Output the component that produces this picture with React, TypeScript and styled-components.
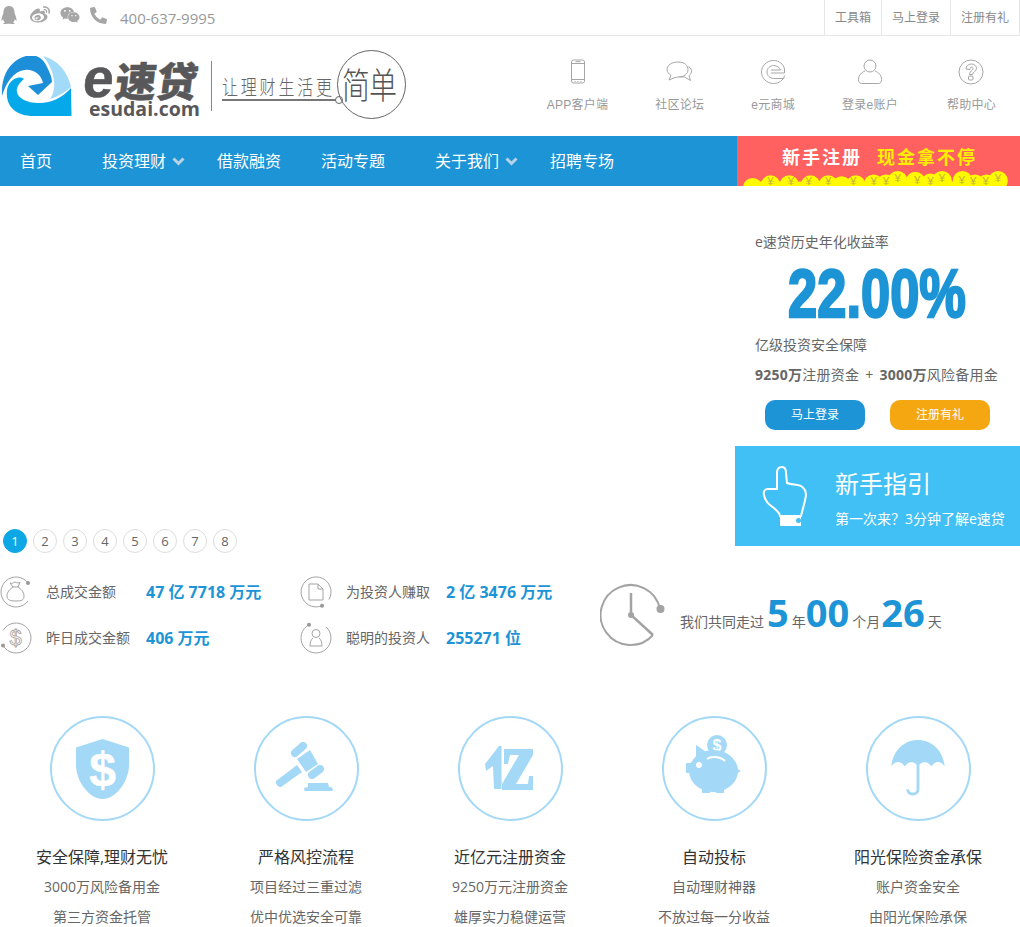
import React from "react";
import styled, { createGlobalStyle } from "styled-components";
import { FaQq, FaWeibo, FaWeixin, FaPhoneAlt } from "react-icons/fa";

const Global = createGlobalStyle`
  html, body { margin: 0; padding: 0; background: #fff; }
  body { font-family: "Open Sans", "Noto Sans CJK SC", sans-serif; color: #666; }
  * { box-sizing: border-box; }
`;

const BLUE = "#1c94d6";
const ICON = "#a3d8f7";

const Page = styled.div`
  width: 1020px;
  height: 927px;
  overflow: hidden;
`;

/* top bar */
const TopBar = styled.div`
  height: 36px;
  border-bottom: 1px solid #e6e6e6;
  display: flex;
  justify-content: space-between;
  align-items: stretch;
`;
const Socials = styled.div`
  display: flex;
  align-items: center;
  color: #a6a6a6;
  padding-bottom: 5px;
`;
const SocialIcon = styled.span<{ $w: number }>`
  width: ${(p) => p.$w}px;
  display: flex;
  align-items: center;
  svg { display: block; }
`;
const Hotline = styled.span`
  font-size: 15px;
  line-height: 24px;
  color: #999;
  margin-left: 3px;
  padding-top: 5px;
`;
const TopLinks = styled.div`
  display: flex;
`;
const TopLink = styled.a<{ $last?: boolean }>`
  font-size: 12px;
  line-height: 35px;
  color: #888;
  padding: 0 10px;
  border-left: 1px solid #e6e6e6;
  border-right: ${(p) => (p.$last ? "1px solid #e6e6e6" : "0")};
`;

/* header */
const Header = styled.div`
  height: 100px;
  display: flex;
  justify-content: space-between;
`;
const Brand = styled.div`
  display: flex;
  align-items: flex-start;
`;
const Swirl = styled.svg`
  display: block;
  width: 73px;
  height: 62px;
  margin-top: 20px;
`;
const Word = styled.div`
  width: 128px;
  margin-left: 10px;
  margin-top: 22px;
`;
const WordMain = styled.div`
  font-family: "Noto Sans CJK SC", sans-serif;
  font-weight: 900;
  font-size: 41px;
  line-height: 41px;
  height: 41px;
  margin-left: -2px;
  color: #58585a;
  white-space: nowrap;
  -webkit-text-stroke: 0.5px #58585a;
  transform: skewX(-7deg);
  transform-origin: left bottom;
`;
const WordLatin = styled.span`
  font-family: "Liberation Sans", sans-serif;
  font-weight: 700;
  font-size: 55px;
  line-height: 41px;
  letter-spacing: 2px;
`;
const WordSub = styled.div`
  font-family: "Open Sans", sans-serif;
  font-weight: 700;
  font-size: 19.5px;
  line-height: 20px;
  color: #58585a;
  margin: 0 0 0 6px;
  white-space: nowrap;
`;
const BrandDivider = styled.div`
  width: 1px;
  height: 50px;
  background: #888;
  margin: 25px 10px 0 0;
`;
const Slogan = styled.div`
  position: relative;
  width: 190px;
  height: 90px;
  margin-top: 14px;
`;
const SloganText = styled.div`
  padding-top: 24px;
  height: 48px;
`;
const SloganGlyphs = styled.span`
  display: inline-block;
  font-family: "Noto Sans CJK SC", sans-serif;
  font-weight: 300;
  font-size: 16px;
  line-height: 24px;
  letter-spacing: 2.8px;
  color: #666;
  white-space: nowrap;
  transform: scaleY(1.3);
`;
const SloganLine = styled.div`
  width: 114px;
  height: 2px;
  background: #777;
  margin-top: 1px;
`;
const SloganDot = styled.span`
  position: absolute;
  left: 113px;
  top: 46px;
  width: 8px;
  height: 8px;
  background: #fff;
  border: 1px solid #666;
  border-radius: 50%;
`;
const SloganRing = styled.div`
  position: absolute;
  left: 115px;
  top: 0;
  width: 69px;
  height: 69px;
  border: 1px solid #666;
  border-radius: 50%;
  text-align: center;
`;
const SloganWord = styled.span`
  display: inline-block;
  font-family: "Noto Sans CJK SC", sans-serif;
  font-weight: 300;
  font-size: 28px;
  line-height: 64px;
  letter-spacing: -1px;
  color: #555;
  white-space: nowrap;
  margin-left: -5px;
  transform: scaleY(1.3);
`;
const QuickLinks = styled.div`
  display: flex;
  gap: 47px;
  padding: 23px 24px 0 0;
`;
const QuickLink = styled.a`
  display: flex;
  flex-direction: column;
  align-items: center;
  font-family: "Liberation Sans", "Noto Sans CJK SC", sans-serif;
  font-size: 12px;
  letter-spacing: 0.25px;
  line-height: 18px;
  color: #999;
  svg { display: block; height: 26px; margin-bottom: 11px; }
  &:last-child { margin-left: 2px; }
`;

/* nav */
const Nav = styled.div`
  height: 50px;
  background: ${BLUE};
  display: flex;
  justify-content: space-between;
`;
const NavList = styled.div`
  display: flex;
`;
const NavItem = styled.a<{ $w: number }>`
  width: ${(p) => p.$w}px;
  padding-left: 20px;
  display: flex;
  align-items: center;
  font-size: 16px;
  line-height: 50px;
  color: #fff;
  svg { margin-left: 6px; }
`;
const Promo = styled.div`
  width: 283px;
  background: #ff6060;
  display: flex;
  flex-direction: column;
  justify-content: space-between;
`;
const PromoText = styled.div`
  padding: 8px 0 0 45px;
  font-size: 18px;
  font-weight: 700;
  line-height: 26px;
  letter-spacing: 2px;
  color: #fff;
  white-space: nowrap;
`;
const PromoHot = styled.span`
  color: #ffee00;
  margin-left: 15px;
`;
const Coins = styled.svg`
  display: block;
  width: 283px;
  height: 18px;
`;

/* hero */
const Hero = styled.div`
  height: 367px;
  display: flex;
  justify-content: space-between;
`;
const Pager = styled.div`
  align-self: flex-end;
  display: flex;
  gap: 6px;
  padding-left: 3px;
`;
const Dot = styled.span<{ $on?: boolean }>`
  width: 24px;
  height: 24px;
  border-radius: 50%;
  border: 1px solid ${(p) => (p.$on ? "#0ea7e5" : "#ddd")};
  background: ${(p) => (p.$on ? "#0ea7e5" : "#fff")};
  color: ${(p) => (p.$on ? "#fff" : "#666")};
  font-size: 13px;
  line-height: 22px;
  text-align: center;
`;
const Side = styled.div`
  width: 285px;
  padding-top: 46px;
`;
const SideLine = styled.div<{ $mt?: number }>`
  padding-left: 20px;
  font-size: 14px;
  line-height: 20px;
  color: #666;
  margin-top: ${(p) => p.$mt ?? 0}px;
  white-space: nowrap;
  b { font-weight: 700; }
`;
const SideFigures = styled(SideLine)`
  letter-spacing: 0.25px;
`;
const Plus = styled.span`
  margin: 0 6px;
`;
const Rate = styled.div`
  height: 80px;
  text-align: center;
`;
const RateFigure = styled.span`
  display: inline-block;
  font-family: "Liberation Sans", sans-serif;
  font-weight: 700;
  font-size: 69px;
  line-height: 84px;
  color: ${BLUE};
  -webkit-text-stroke: 2.5px ${BLUE};
  transform: scaleX(0.76);
`;
const Actions = styled.div`
  display: flex;
  gap: 25px;
  padding-left: 30px;
  margin-top: 15px;
`;
const Action = styled.a<{ $bg: string }>`
  width: 100px;
  height: 30px;
  border-radius: 10px;
  background: ${(p) => p.$bg};
  color: #fff;
  font-size: 12px;
  line-height: 30px;
  text-align: center;
`;
const Guide = styled.div`
  height: 100px;
  margin-top: 16px;
  background: #41c0f5;
  display: flex;
  align-items: center;
  padding-left: 24px;
  color: #fff;
`;
const GuideHand = styled.svg`
  display: block;
  width: 60px;
  height: 70px;
  margin-left: -4px;
`;
const GuideBody = styled.div`
  margin-left: 20px;
  padding-top: 4px;
`;
const GuideTitle = styled.div`
  font-size: 24px;
  line-height: 36px;
`;
const GuideSub = styled.div`
  font-size: 14px;
  line-height: 24px;
  margin-top: 5px;
  white-space: nowrap;
`;

/* stats */
const Stats = styled.div`
  display: flex;
  padding-top: 16px;
`;
const StatGrid = styled.div`
  width: 600px;
  display: grid;
  grid-template-columns: 300px 300px;
  grid-auto-rows: 46px;
`;
const Stat = styled.div`
  display: flex;
  align-items: center;
`;
const StatIcon = styled.svg`
  display: block;
  width: 32px;
  height: 32px;
  margin-right: 14px;
  flex: none;
`;
const StatLabel = styled.span`
  width: 100px;
  font-size: 14px;
  line-height: 20px;
  color: #666;
  white-space: nowrap;
`;
const StatValue = styled.span`
  font-size: 16px;
  font-weight: 700;
  line-height: 20px;
  color: ${BLUE};
  white-space: nowrap;
`;
const Days = styled.div`
  display: flex;
  align-items: flex-start;
`;
const Clock = styled.svg`
  display: block;
  width: 68px;
  height: 64px;
  margin: 14px 12px 0 0;
`;
const Tally = styled.div`
  display: flex;
  align-items: baseline;
  font-size: 14px;
  color: #666;
  line-height: 50px;
  padding-top: 18px;
  white-space: nowrap;
`;
const Big = styled.b<{ $l?: number; $r?: number }>`
  font-size: 38px;
  font-weight: 700;
  color: ${BLUE};
  margin: 0 ${(p) => p.$r ?? 3}px 0 ${(p) => p.$l ?? 3}px;
`;

/* features */
const Features = styled.div`
  display: grid;
  grid-template-columns: repeat(5, 204px);
  margin-top: 55px;
`;
const Feature = styled.div`
  display: flex;
  flex-direction: column;
  align-items: center;
`;
const Badge = styled.div`
  width: 105px;
  height: 105px;
  border: 2px solid ${ICON};
  border-radius: 50%;
  display: flex;
  align-items: center;
  justify-content: center;
  svg { display: block; }
`;
const FeatureTitle = styled.div`
  margin-top: 21px;
  font-size: 16px;
  line-height: 30px;
  color: #333;
  white-space: nowrap;
`;
const FeatureLine = styled.div`
  font-size: 14px;
  line-height: 30px;
  color: #666;
  white-space: nowrap;
`;

/* drawings */
const stroke = { fill: "none", stroke: "#a6a6a6", strokeWidth: 1 } as const;
const QuickIcons: Record<string, React.ReactNode> = {
  phone: (
    <svg width="20" viewBox="0 0 20 26" {...stroke}>
      <rect x="3.500" y="1" width="13" height="23" rx="2" />
      <path d="M3.500 4.500h13M3.500 20.500h13M7.500 2.700h5M6.500 22.500h1M9.500 22.500h1M12.500 22.500h1" />
    </svg>
  ),
  chat: (
    <svg width="28" viewBox="0 0 28 26" {...stroke}>
      <path d="M12 3c6 0 10 3 10 7.500s-4 7.500-10 7.500l-3 .5-6 2.500 2-4.500C3 15 1 13 1 10.500 1 6 6 3 12 3z" />
      <path d="M22.500 7.500c2.500 1.500 3.500 3.500 3 5.500-.5 2-2 3.300-2.500 3.800l1.500 4.700-6-3.500-5-.2" />
    </svg>
  ),
  e: (
    <svg width="26" viewBox="0 0 26 26" {...stroke}>
      <path d="M24.700 16.500c-1.500 5-6 8-11.200 8C7 24.500 1.500 19.500 1.500 13S7 1.500 13.500 1.500c5.500 0 10 3.500 11 8.500v4H11" />
      <path d="M11 11h9.500c-.8-2.500-3.800-4.500-6.800-4.500C10 6.500 7 9.500 7 13s3 6.500 6.800 6.500h10.500" />
    </svg>
  ),
  user: (
    <svg width="26" viewBox="0 0 26 26" {...stroke}>
      <circle cx="13" cy="7" r="6" />
      <path d="M8 12c-3.500 1.500-6.500 4-6.500 8.500 0 2.500 1 4 3 4h17c2 0 3-1.500 3-4 0-4.500-3-7-6.500-8.500" />
    </svg>
  ),
  help: (
    <svg width="26" viewBox="0 0 26 26" {...stroke}>
      <circle cx="13" cy="13" r="12" />
      <path d="M8 10c0-3 2.500-5 5.500-5s5 2 5 4.500c0 3-4 3.500-4 6h-3c0-3.500 3.500-4 3.500-6 0-1-.7-1.500-1.500-1.500S12 9 12 10.500z" />
      <rect x="10.500" y="17" width="4.500" height="4" rx="1" />
    </svg>
  ),
};

const statStroke = { fill: "none", stroke: "#a3a3a3", strokeWidth: 1 } as const;
const Ring = ({ d, cx, cy }: { d: string; cx: number; cy: number }) => (
  <>
    <path d={d} {...statStroke} />
    <circle cx={cx} cy={cy} r="2" fill="#999" />
  </>
);

const StatIcons: Record<string, React.ReactNode> = {
  bag: (
    <StatIcon viewBox="0 0 32 32">
      <Ring d="M28 7A15 15 0 1 0 28 25" cx={28} cy={7} />
      <g {...statStroke}>
        <path d="M10 7c2 1 3 0 5-1 1.500 1 3.500 1 5 .5L18 11c3 2 6 5 6 9 0 4-2 5-8 5s-9-1-9-5c0-4 3-7 6-9z" />
        <path d="M12.500 11h6" />
      </g>
    </StatIcon>
  ),
  doc: (
    <StatIcon viewBox="0 0 32 32">
      <Ring d="M22 29.700A15 15 0 1 1 29 23.500" cx={22} cy={29.700} />
      <g {...statStroke}>
        <path d="M9 8h9l5 5v11H9z" />
        <path d="M18 8v5h5" />
      </g>
    </StatIcon>
  ),
  dollar: (
    <StatIcon viewBox="0 0 32 32">
      <Ring d="M3 8.500A15 15 0 1 1 3 23.500" cx={3} cy={23.500} />
      <text x="15.500" y="23" textAnchor="middle" fontFamily="Liberation Sans" fontSize="22" fill="#fff" stroke="#a3a3a3" strokeWidth="0.800">$</text>
    </StatIcon>
  ),
  person: (
    <StatIcon viewBox="0 0 32 32">
      <Ring d="M9 2.700A15 15 0 1 0 26 4.800" cx={9} cy={2.700} />
      <g {...statStroke}>
        <circle cx="16" cy="11.500" r="4" />
        <path d="M13 16c-2 1.500-3 4-3 8h12c0-4-1-6.500-3-8" />
      </g>
    </StatIcon>
  ),
};

const FeatureIcons: Record<string, React.ReactNode> = {
  shield: (
    <svg width="53" height="60" viewBox="0 0 53 60">
      <path d="M26.500 0 53 8.500V26C53 42 40 60 26.500 60S0 42 0 26V8.500z" fill={ICON} />
      <text x="26.500" y="47" textAnchor="middle" fontFamily="Liberation Sans" fontWeight="700" fontSize="48" fill="#fff" stroke="#fff" strokeWidth="0.500">$</text>
    </svg>
  ),
  gavel: (
    <svg width="63" height="54" viewBox="0 0 63 54" fill={ICON}>
      <path d="M20 11 28 4" stroke={ICON} strokeWidth="8" strokeLinecap="round" />
      <path d="M22 17 35 8 43 22 31 30z" />
      <path d="M37 33 45 27" stroke={ICON} strokeWidth="8" strokeLinecap="round" />
      <path d="M1 39 22 23l5 7L6 45c-2 1-6-3-5-6z" />
      <path d="M33 41h20l1 4 3 .5c1 0 1 3.500 0 3.500H30c-1 0-1-3.500 0-3.500l3-.5z" />
    </svg>
  ),
  yi: (
    <svg width="50" height="45" viewBox="0 0 50 45" fill={ICON}>
      <path d="M14 0h2.500v43H9L8 20l-7 5-1-7z" />
      <path d="M19 3h29v6L31 38h12l1-8h4v14H17v-6L34 9h-9l-2 9h-4z" />
    </svg>
  ),
  pig: (
    <svg width="57" height="67" viewBox="0 0 57 67" fill={ICON}>
      <circle cx="31" cy="10" r="10" />
      <text x="31" y="16" textAnchor="middle" fontFamily="Liberation Sans" fontWeight="700" fontSize="16" fill="#fff">$</text>
      <ellipse cx="27.500" cy="36" rx="24.500" ry="21" />
      <path d="M10 10 26 21 10 28z" />
      <rect x="0" y="28" width="7" height="10" rx="1" />
      <path d="M50 33l5 3-5 3z" />
      <rect x="16" y="50" width="8" height="8" />
      <rect x="30" y="50" width="8" height="8" />
      <circle cx="13" cy="30" r="3" fill="#fff" />
      <path d="M21 24c4-3 13-3 18 2" fill="none" stroke="#fff" strokeWidth="2" />
    </svg>
  ),
  umbrella: (
    <svg width="56" height="57" viewBox="0 0 58 60" fill={ICON}>
      <path d="M29 0c15 0 27 12 28 28-3-6-10-7-14 0-3-6-11-6-14 0-3-6-11-6-14 0C11 21 4 22 1 28 2 12 14 0 29 0z" />
      <path d="M29 26v26c0 6-10 7-11 0" fill="none" stroke={ICON} strokeWidth="3" />
    </svg>
  ),
};

const humps: [number, number][] = [
  [20, 6], [41, 6], [65, 6], [85, 6], [116, 6], [136, 5], [163, 1], [183, 2], [213, 1], [236, 1], [263, 5], [276, 1], [0, 9], [100, 7], [150, 5], [200, 4], [250, 5],
];
const yens: [number, number][] = [
  [20, 17], [43, 17], [63, 17], [85, 17], [113, 17], [136, 17], [150, 17], [163, 13], [185, 16], [200, 17], [213, 13], [235, 16], [248, 17], [262, 17], [276, 13],
];

const CoinRow = () => (
  <Coins viewBox="0 0 283 18" aria-hidden>
    {humps.map(([x, top]) => (
      <circle key={x} cx={x} cy={top + 11} r="11" fill="#fffa00" />
    ))}
    <rect y="13" width="283" height="5" fill="#fffa00" />
    {yens.map(([x, y]) => (
      <text key={x} x={x} y={y} textAnchor="middle" fontFamily="Liberation Sans" fontSize="13" fill="#c4b63c">¥</text>
    ))}
  </Coins>
);

const features = [
  { icon: "shield", title: "安全保障,理财无忧", lines: ["3000万风险备用金", "第三方资金托管"] },
  { icon: "gavel", title: "严格风控流程", lines: ["项目经过三重过滤", "优中优选安全可靠"] },
  { icon: "yi", title: "近亿元注册资金", lines: ["9250万元注册资金", "雄厚实力稳健运营"] },
  { icon: "pig", title: "自动投标", lines: ["自动理财神器", "不放过每一分收益"] },
  { icon: "umbrella", title: "阳光保险资金承保", lines: ["账户资金安全", "由阳光保险承保"] },
];

const Chevron = () => (
  <svg width="13" height="9" viewBox="0 0 13 9" fill="none" stroke="#b9d3e6" strokeWidth="3">
    <path d="M1.500 1.500 6.500 6.500 11.500 1.500" />
  </svg>
);

export default function App() {
  return (
    <Page>
      <Global />
      <TopBar>
        <Socials>
          <SocialIcon $w={30}><FaQq size={18} /></SocialIcon>
          <SocialIcon $w={30}><FaWeibo size={20} /></SocialIcon>
          <SocialIcon $w={30}><FaWeixin size={20} /></SocialIcon>
          <SocialIcon $w={27}><FaPhoneAlt size={17} /></SocialIcon>
          <Hotline>400-637-9995</Hotline>
        </Socials>
        <TopLinks>
          <TopLink>工具箱</TopLink>
          <TopLink>马上登录</TopLink>
          <TopLink $last>注册有礼</TopLink>
        </TopLinks>
      </TopBar>

      <Header>
        <Brand>
          <Swirl viewBox="0 6 73 62">
            <path fill="#1d8fd8" d="M2 46C1 28 8 10 28 5.500 38 4 44 10 47 17c3 6 5 11 5 15L38 45 28 36l15-3C41 24 33 19 25 20 14 21 6 32 2 46z" />
            <path fill="#a3daf8" d="M43 6c15 4 25 16 28 31-7 6-14 10-21 12 7-9 6-27-7-43z" />
            <path fill="#05a8e8" d="M71 38l.500 28H33C18 66 5 58 7 40c1-6 5-11 10-12 3-1 6 0 7 1-5 4-8 9-7 13 1 6 9 11 22 11 13 0 24-6 32-15z" />
          </Swirl>
          <Word>
            <WordMain><WordLatin>e</WordLatin>速贷</WordMain>
            <WordSub>esudai.com</WordSub>
          </Word>
          <BrandDivider />
          <Slogan>
            <SloganText><SloganGlyphs>让理财生活更</SloganGlyphs></SloganText>
            <SloganLine />
            <SloganDot />
            <SloganRing><SloganWord>简单</SloganWord></SloganRing>
          </Slogan>
        </Brand>
        <QuickLinks>
          <QuickLink>{QuickIcons.phone}APP客户端</QuickLink>
          <QuickLink>{QuickIcons.chat}社区论坛</QuickLink>
          <QuickLink>{QuickIcons.e}e元商城</QuickLink>
          <QuickLink>{QuickIcons.user}登录e账户</QuickLink>
          <QuickLink>{QuickIcons.help}帮助中心</QuickLink>
        </QuickLinks>
      </Header>

      <Nav>
        <NavList>
          <NavItem $w={82}>首页</NavItem>
          <NavItem $w={115}>投资理财<Chevron /></NavItem>
          <NavItem $w={104}>借款融资</NavItem>
          <NavItem $w={114}>活动专题</NavItem>
          <NavItem $w={115}>关于我们<Chevron /></NavItem>
          <NavItem $w={100}>招聘专场</NavItem>
        </NavList>
        <Promo>
          <PromoText>新手注册<PromoHot>现金拿不停</PromoHot></PromoText>
          <CoinRow />
        </Promo>
      </Nav>

      <Hero>
        <Pager>
          {[1, 2, 3, 4, 5, 6, 7, 8].map((n) => (
            <Dot key={n} $on={n === 1}>{n}</Dot>
          ))}
        </Pager>
        <Side>
          <SideLine>e速贷历史年化收益率</SideLine>
          <Rate><RateFigure>22.00%</RateFigure></Rate>
          <SideLine $mt={3}>亿级投资安全保障</SideLine>
          <SideFigures $mt={10}><b>9250万</b>注册资金<Plus>+</Plus><b>3000万</b>风险备用金</SideFigures>
          <Actions>
            <Action $bg={BLUE}>马上登录</Action>
            <Action $bg="#f4a711">注册有礼</Action>
          </Actions>
          <Guide>
            <GuideHand viewBox="0 0 60 70">
              <path d="M25 55c0-3-2-4-5-7-5-4-10-7-11-14-1-4 1-6 4-6h9V12c0-5 3-6 5-6 3 0 4 2 4 6l1 10c5 2 10 1 14 3 3 2 5 5 5 9-1 7-3 13-5 21z" fill="none" stroke="#fff" strokeWidth="2" />
              <path d="M25 55h21v10H26c-1 0-1-1-1-2z" fill="#fff" />
              <circle cx="43.500" cy="59.500" r="2.500" fill="#41c0f5" />
            </GuideHand>
            <GuideBody>
              <GuideTitle>新手指引</GuideTitle>
              <GuideSub>第一次来？3分钟了解e速贷</GuideSub>
            </GuideBody>
          </Guide>
        </Side>
      </Hero>

      <Stats>
        <StatGrid>
          <Stat>{StatIcons.bag}<StatLabel>总成交金额</StatLabel><StatValue>47 亿 7718 万元</StatValue></Stat>
          <Stat>{StatIcons.doc}<StatLabel>为投资人赚取</StatLabel><StatValue>2 亿 3476 万元</StatValue></Stat>
          <Stat>{StatIcons.dollar}<StatLabel>昨日成交金额</StatLabel><StatValue>406 万元</StatValue></Stat>
          <Stat>{StatIcons.person}<StatLabel>聪明的投资人</StatLabel><StatValue>255271 位</StatValue></Stat>
        </StatGrid>
        <Days>
          <Clock viewBox="0 0 68 64" fill="none" stroke="#a3a3a3" strokeWidth="2">
            <path d="M60 26A30 30 0 1 0 53 52" />
            <circle cx="60.500" cy="26" r="4" fill="#a3a3a3" stroke="none" />
            <path d="M31 10v22L53 52" strokeWidth="2.500" />
            <circle cx="31" cy="32" r="3" fill="#a3a3a3" stroke="none" />
          </Clock>
          <Tally>
            我们共同走过<Big>5</Big>年<Big $l={0} $r={3}>00</Big>个月<Big $l={1} $r={3}>26</Big>天
          </Tally>
        </Days>
      </Stats>

      <Features>
        {features.map((f) => (
          <Feature key={f.title}>
            <Badge>{FeatureIcons[f.icon]}</Badge>
            <FeatureTitle>{f.title}</FeatureTitle>
            {f.lines.map((l) => (
              <FeatureLine key={l}>{l}</FeatureLine>
            ))}
          </Feature>
        ))}
      </Features>
    </Page>
  );
}
